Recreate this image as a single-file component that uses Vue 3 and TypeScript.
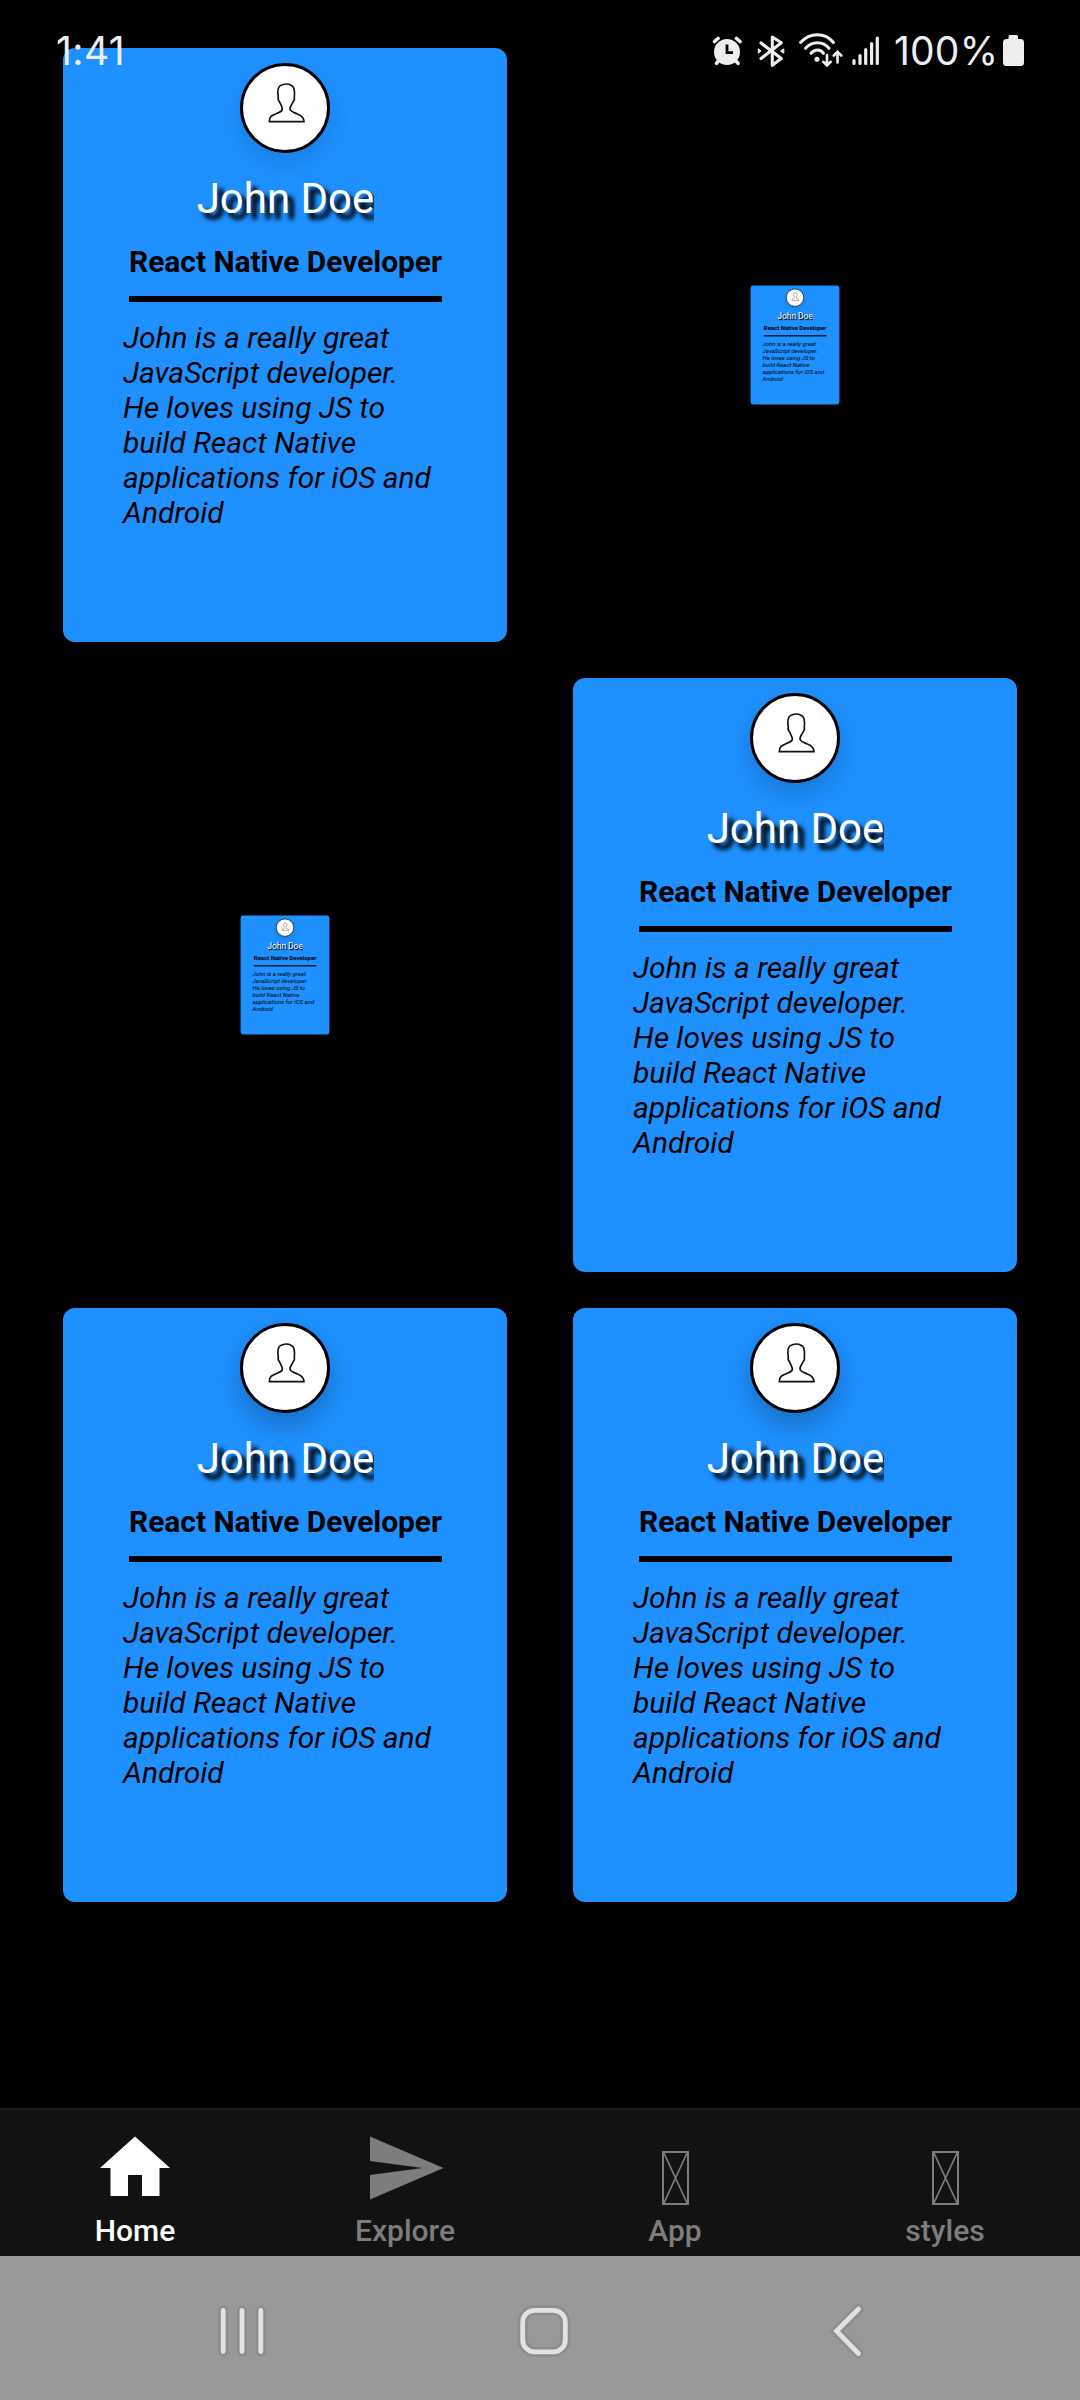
<script setup lang="ts">
interface Profile {
  scaled: boolean
}

const name = 'John Doe'
const occupation = 'React Native Developer'
const bio =
  'John is a really great JavaScript developer. He loves using JS to build React Native applications for iOS and Android'

const rows: Profile[][] = [
  [{ scaled: false }, { scaled: true }],
  [{ scaled: true }, { scaled: false }],
  [{ scaled: false }, { scaled: false }],
]

const tabs = [
  { label: 'Home', icon: 'home', active: true },
  { label: 'Explore', icon: 'send', active: false },
  { label: 'App', icon: 'missing', active: false },
  { label: 'styles', icon: 'missing', active: false },
]
</script>

<template>
  <div class="screen">
    <header class="status">
      <span class="clock">1:41</span>
      <div class="indicators">
        <svg class="alarm" viewBox="0 0 30 30" width="30" height="30">
          <g fill="none" stroke="#eee" stroke-width="3.6" stroke-linecap="round">
            <path d="M2.500 5.500L6 2.500M28 5.500L24.500 2.500" />
            <path d="M7 24L4.500 27.300M23 24L26 27.300" />
          </g>
          <circle cx="15" cy="16" r="13" fill="#eee" />
          <path d="M15 8.500v8.200h6" fill="none" stroke="#000" stroke-width="2.8" />
        </svg>
        <svg class="bluetooth" viewBox="0 0 28 34" width="28" height="34">
          <path d="M4 9L24.300 24.500L15.300 31.300V3L24.300 8.800L4 24.500" fill="none" stroke="#eee" stroke-width="3.1" stroke-linecap="round" stroke-linejoin="round" />
          <path d="M1.300 14.800L4 17L1.300 19.200ZM26.800 14.800L23.600 17L26.800 19.200Z" fill="#eee" stroke="#eee" stroke-width="1" stroke-linejoin="round" />
        </svg>
        <svg class="wifi" viewBox="0 0 45 35" width="45" height="35">
          <g fill="none" stroke="#eee" stroke-linecap="round">
            <path d="M2.500 9.500C12 -1 27 -1 35.500 9.500M7.500 15.300C14 7.800 25 7.800 31 15.300M13 20.300C17 16 22.500 16 25.500 20.300" stroke-width="3" />
            <path d="M29 22v10M25.300 28.800L29 32.400L32.700 28.800M39.500 29.500V19M35.800 22.500L39.500 18.900L43.200 22.500" stroke-width="2.6" />
          </g>
          <circle cx="19" cy="26.300" r="2.500" fill="#eee" />
        </svg>
        <svg class="signal" viewBox="0 0 28 30" width="28" height="30">
          <path d="M2 24.500V27.500M8 19.500V27.500M13.700 13.500V27.500M19.600 7.500V27.500M25.300 2V27.500" stroke="#eee" stroke-width="3.2" stroke-linecap="round" />
        </svg>
        <span class="percent">100%</span>
        <svg class="battery" viewBox="0 0 21 31" width="21" height="31">
          <path d="M5.500 4V1.500Q5.500 0 7 0H13.500Q15 0 15 1.500V4H17.500Q21 4 21 7.500V27.500Q21 31 17.500 31H3.500Q0 31 0 27.500V7.500Q0 4 3.500 4Z" fill="#eee" />
        </svg>
      </div>
    </header>

    <main class="gallery">
      <div v-for="(row, r) in rows" :key="r" class="row" :class="'row-' + (r + 1)">
        <article v-for="(card, c) in row" :key="c" class="card" :class="{ scaled: card.scaled }">
          <div class="avatar">
            <svg viewBox="69 48 252 252" width="84" height="84">
              <path
                d="M148 215C147 200 156 196 168 191C180 187 188 184 187 176C187 170 182 164 179 156C175 152 173 148 175 142C172 125 173 112 181 107C192 100 206 101 213 106C224 108 225 122 223 142C225 148 223 152 219 156C216 164 209 170 210 177C210 184 220 187 232 192C245 197 252 202 252 215Z"
                fill="none"
                stroke="#111"
                stroke-width="5"
              />
            </svg>
          </div>
          <h2 class="name">{{ name }}</h2>
          <h3 class="occupation">{{ occupation }}</h3>
          <p class="bio">{{ bio }}</p>
        </article>
      </div>
    </main>

    <nav class="tabs">
      <div v-for="tab in tabs" :key="tab.label" class="tab" :class="{ active: tab.active }">
        <div class="tab-icon">
          <svg v-if="tab.icon === 'home'" viewBox="0 0 24 24" width="84" height="84">
            <path d="M10 20v-6h4v6h5v-8h3L12 3 2 12h3v8z" fill="currentColor" />
          </svg>
          <svg v-else-if="tab.icon === 'send'" viewBox="0 0 24 24" width="84" height="84">
            <path d="M2 21L23 12L2 3V10L17 12L2 14Z" fill="currentColor" />
          </svg>
          <svg v-else class="missing" viewBox="0 0 27 54" width="27" height="54">
            <path d="M1 1H26V53H1Z" fill="none" stroke="currentColor" stroke-width="2" />
            <path d="M1.500 1L25.500 53M25.500 1L1.500 53" fill="none" stroke="currentColor" stroke-width="1.700" />
          </svg>
        </div>
        <span class="tab-label">{{ tab.label }}</span>
      </div>
    </nav>

    <footer class="system">
      <svg viewBox="0 0 1080 144" width="1080" height="144" fill="none" stroke-linecap="round">
        <g v-for="pass in 2" :key="pass" :stroke="pass === 1 ? '#8d8d8d' : '#e2e2e2'" :stroke-width="pass === 1 ? 10 : 4.8">
          <path d="M223.200 54.500V95.500M242 54.500V95.500M260.800 54.500V95.500" />
          <rect x="522.700" y="54.300" width="42.600" height="41.600" rx="12" />
          <path d="M858.500 53L836.500 75L858.500 97.500" />
        </g>
      </svg>
    </footer>
  </div>
</template>

<style>
body {
  background: #000;
}
</style>

<style scoped>
.screen {
  position: relative;
  display: flex;
  flex-direction: column;
  width: 1080px;
  height: 2400px;
  overflow: hidden;
  background: #000;
  font-family: Roboto, sans-serif;
}

svg {
  display: block;
  flex: none;
}

.status {
  position: absolute;
  z-index: 2;
  top: 0;
  left: 0;
  display: flex;
  justify-content: space-between;
  width: 1080px;
  height: 100px;
  box-sizing: border-box;
  padding: 0 56px;
  color: #eee;
  font: 400 39px/102px Inter, sans-serif;
}

.clock {
  letter-spacing: 0.4px;
}

.indicators {
  display: flex;
  align-items: flex-start;
}

.alarm {
  margin-top: 36px;
}

.bluetooth {
  margin: 34px 0 0 15px;
}

.wifi {
  margin: 33px 0 0 13px;
}

.signal {
  margin: 36px 0 0 9px;
}

.percent {
  width: 100px;
  margin: 0 9px 0 14px;
  letter-spacing: 0.2px;
  white-space: nowrap;
}

.battery {
  margin-top: 35px;
}

.gallery {
  display: flex;
  flex: 1;
  flex-direction: column;
  gap: 36px;
  padding: 48px 63px 0;
}

.row {
  --shade: 0 10px 24px rgba(0, 0, 0, 0.12);
  display: flex;
  justify-content: space-between;
}

.row-2 {
  --shade: 0 11px 26px rgba(0, 0, 0, 0.17);
}

.row-3 {
  --shade: 0 12px 27px rgba(0, 0, 0, 0.24);
}

.card {
  display: flex;
  flex-direction: column;
  align-items: center;
  width: 444px;
  height: 594px;
  box-sizing: border-box;
  padding-top: 15px;
  border-radius: 12px;
  background: #1e90ff;
  color: #000;
}

.scaled {
  transform: scale(0.2);
}

.avatar {
  width: 84px;
  height: 84px;
  border: 3px solid #000;
  border-radius: 50%;
  background: #fff;
  box-shadow: var(--shade);
}

.name {
  margin: 20px 0 0 1px;
  overflow: hidden;
  color: #fff;
  font-size: 42px;
  font-weight: 400;
  line-height: 52px;
  text-shadow: 6px 6px 4px #000, 6px 6px 5px rgba(0, 0, 0, 0.5);
}

.occupation {
  margin: 18px 0 0 1px;
  padding-bottom: 16px;
  border-bottom: 6px solid #000;
  font-size: 30px;
  font-weight: 700;
  letter-spacing: -0.07px;
  line-height: 37px;
  white-space: nowrap;
}

.bio {
  width: 316px;
  margin: 18px 8px 0 0;
  font-size: 30px;
  font-style: italic;
  letter-spacing: -0.06px;
  line-height: 35px;
}

.tabs {
  display: flex;
  height: 148px;
  box-sizing: border-box;
  border-top: 2px solid #1b1b1b;
  background: #121212;
}

.tab {
  display: flex;
  flex: 1;
  flex-direction: column;
  align-items: center;
  color: #7d7d7d;
}

.active {
  color: #fff;
}

.tab-icon {
  display: flex;
  justify-content: center;
  height: 84px;
  margin-top: 16px;
}

.missing {
  margin-top: 25px;
}

.tab-label {
  margin-top: 3px;
  font-size: 30px;
  font-weight: 500;
  line-height: 36px;
}

.system {
  height: 144px;
  background: #999;
}
</style>
